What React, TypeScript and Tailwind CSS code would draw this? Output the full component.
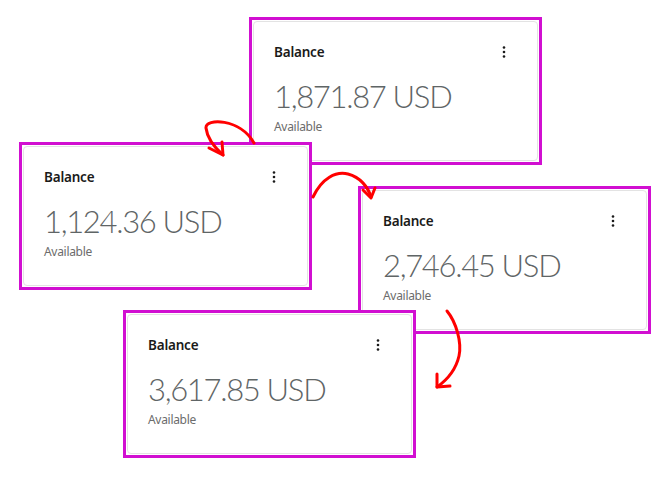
import React from "react";

type Card = { amount: string; left: string; top: string; z: string };

const cards: Card[] = [
  { amount: "1,871.87 USD", left: "left-[249px]", top: "top-[17px]", z: "z-0" },
  { amount: "1,124.36 USD", left: "left-[19px]", top: "top-[142px]", z: "z-10" },
  { amount: "2,746.45 USD", left: "left-[358px]", top: "top-[186px]", z: "z-0" },
  { amount: "3,617.85 USD", left: "left-[123px]", top: "top-[310px]", z: "z-10" },
];

function Dots() {
  return (
    <svg width="4" height="12" viewBox="0 0 4 12" className="text-[#1a1a1a]">
      <circle cx="2" cy="1.5" r="1.3" fill="currentColor" />
      <circle cx="2" cy="6" r="1.3" fill="currentColor" />
      <circle cx="2" cy="10.5" r="1.3" fill="currentColor" />
    </svg>
  );
}

function BalanceCard({ amount, left, top, z }: Card) {
  return (
    <div
      className={`absolute ${left} ${top} ${z} w-[293px] h-[148px] border-[3px] border-[#d10fd1] bg-white p-px`}
    >
      <div className="h-full w-full rounded-[4px] border border-[#e3e3e3] bg-white px-[20px] pt-[21px]">
        <div className="flex items-center justify-between pr-[11px]">
          <span className="text-[13.5px] leading-[18px] font-semibold tracking-[-0.2px] text-[#1a1a1a]">
            Balance
          </span>
          <Dots />
        </div>
        <div className="mt-[14px] text-[31px] leading-[42px] font-light tracking-[-1.3px] text-[#5f6566] font-['Lato',sans-serif]">
          {amount}
        </div>
        <div className="mt-[2px] text-[12px] leading-[16px] tracking-[-0.3px] text-[#6c6c6c]">Available</div>
      </div>
    </div>
  );
}

function Arrows() {
  return (
    <svg
      className="absolute inset-0 z-20 pointer-events-none"
      width="667"
      height="480"
      viewBox="0 0 667 480"
      fill="none"
      stroke="#ff0000"
      strokeWidth="3"
      strokeLinecap="round"
      strokeLinejoin="round"
    >
      {/* card 1 -> card 2 */}
      <path d="M254 143 C 240 118, 205 118, 206 128 C 207 137, 214 147, 223 155" />
      <path d="M209 148 L 223 155 L 222 142" />
      {/* card 2 -> card 3 */}
      <path d="M313 197 C 322 178, 336 171, 348 174 C 360 177, 368 187, 371 197" />
      <path d="M363 190 L 371 198 L 375 188" />
      {/* card 3 -> card 4 */}
      <path d="M447 311 C 456 322, 462 342, 459 356 C 456 369, 447 380, 437 387" />
      <path d="M437 374 L 437 387 L 450 386" />
    </svg>
  );
}

export default function App() {
  return (
    <div
      className="relative w-[667px] h-[480px] bg-white overflow-hidden"
      style={{ fontFamily: '"Noto Sans", "Open Sans", sans-serif' }}
    >
      {cards.map((c) => (
        <BalanceCard key={c.amount} {...c} />
      ))}
      <Arrows />
    </div>
  );
}
